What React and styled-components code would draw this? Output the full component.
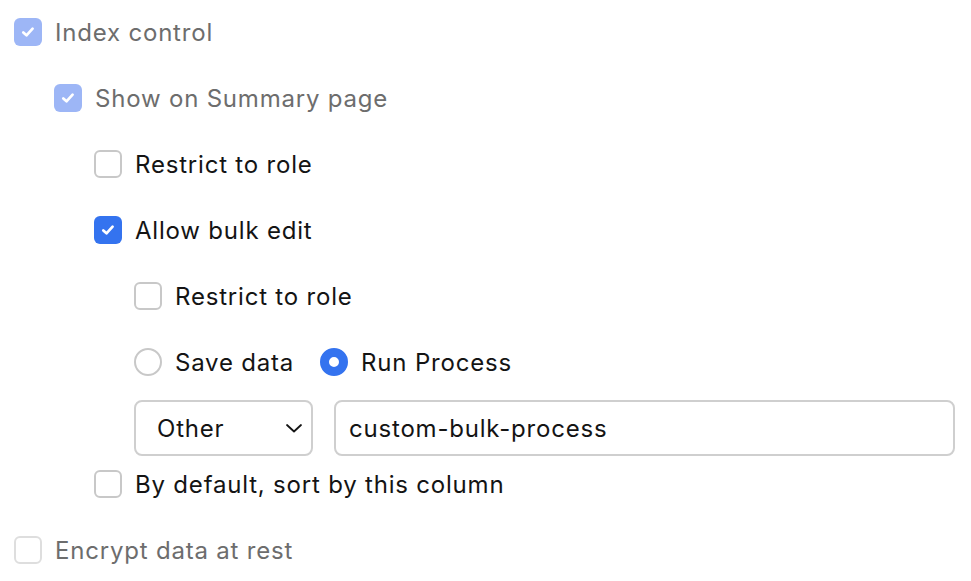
import React from "react";
import styled, { createGlobalStyle, css } from "styled-components";

const GlobalStyle = createGlobalStyle`
  body {
    margin: 0;
    background: #ffffff;
    font-family: "Inter", "Liberation Sans", sans-serif;
  }
`;

const Page = styled.div`
  width: 971px;
  height: 581px;
  padding: 4px 16px 0 14px;
  box-sizing: border-box;
  overflow: hidden;
`;

const Group = styled.div`
  padding-left: ${({ indent }) => (indent ? "40px" : "0")};
`;

const Row = styled.label`
  display: flex;
  align-items: center;
  height: 56px;
  margin-bottom: ${({ flat }) => (flat ? "0" : "10px")};
  gap: 13px;
  font-size: 24px;
  color: ${({ disabled }) => (disabled ? "#6d6d6d" : "#141414")};
  letter-spacing: 0.8px;
`;

const RadioRow = styled.div`
  display: flex;
  align-items: center;
  gap: 26px;
  height: 56px;
  margin-bottom: 10px;
`;

const Box = styled.span`
  width: 28px;
  height: 28px;
  box-sizing: border-box;
  border-radius: 6px;
  flex: none;
  display: flex;
  align-items: center;
  justify-content: center;
  ${({ checked, disabled }) =>
    checked
      ? css`
          background: ${disabled ? "#9db6f6" : "#3473ef"};
        `
      : css`
          border: 2px solid ${disabled ? "#dedede" : "#c8c8c8"};
          background: #fff;
        `}
`;

const Dot = styled.span`
  width: 28px;
  height: 28px;
  box-sizing: border-box;
  border-radius: 50%;
  flex: none;
  ${({ checked }) =>
    checked
      ? css`
          border: 9px solid #3473ef;
          background: #fff;
        `
      : css`
          border: 2px solid #c8c8c8;
          background: #fff;
        `}
`;

const FieldRow = styled.div`
  display: flex;
  align-items: center;
  gap: 21px;
  height: 56px;
`;

const Select = styled.div`
  width: 179px;
  height: 56px;
  box-sizing: border-box;
  border: 2px solid #cfcfcf;
  border-radius: 8px;
  display: flex;
  align-items: center;
  justify-content: space-between;
  padding: 0 8px 0 21px;
  font-size: 24px;
  letter-spacing: 0.8px;
  color: #141414;
`;

const Input = styled.div`
  flex: 1;
  height: 56px;
  box-sizing: border-box;
  border: 2px solid #cfcfcf;
  border-radius: 8px;
  display: flex;
  align-items: center;
  padding: 0 13px;
  font-size: 24px;
  letter-spacing: 0.8px;
  color: #141414;
`;

const Check = () => (
  <svg width="14" height="12" viewBox="0 0 14 12">
    <path
      d="M2.3 6.4 L5.5 9.3 L11.6 2.7"
      fill="none"
      stroke="#fff"
      strokeWidth="2.7"
      strokeLinecap="round"
      strokeLinejoin="round"
    />
  </svg>
);

const Chevron = () => (
  <svg width="18" height="12" viewBox="0 0 18 12">
    <path
      d="M2 3 L9 9.5 L16 3"
      fill="none"
      stroke="#141414"
      strokeWidth="1.8"
      strokeLinecap="round"
      strokeLinejoin="round"
    />
  </svg>
);

function Option({ label, checked, disabled }) {
  return (
    <Row disabled={disabled}>
      <Box checked={checked} disabled={disabled}>
        {checked && <Check />}
      </Box>
      {label}
    </Row>
  );
}

function Radio({ label, checked }) {
  return (
    <Row as="span" flat>
      <Dot checked={checked} />
      {label}
    </Row>
  );
}

export default function App() {
  return (
    <Page>
      <GlobalStyle />
      <Option label="Index control" checked disabled />
      <Group indent>
        <Option label="Show on Summary page" checked disabled />
        <Group indent>
          <Option label="Restrict to role" />
          <Option label="Allow bulk edit" checked />
          <Group indent>
            <Option label="Restrict to role" />
            <RadioRow>
              <Radio label="Save data" />
              <Radio label="Run Process" checked />
            </RadioRow>
            <FieldRow>
              <Select>
                Other
                <Chevron />
              </Select>
              <Input>custom-bulk-process</Input>
            </FieldRow>
          </Group>
          <Option label="By default, sort by this column" />
        </Group>
      </Group>
      <Option label="Encrypt data at rest" disabled />
    </Page>
  );
}
